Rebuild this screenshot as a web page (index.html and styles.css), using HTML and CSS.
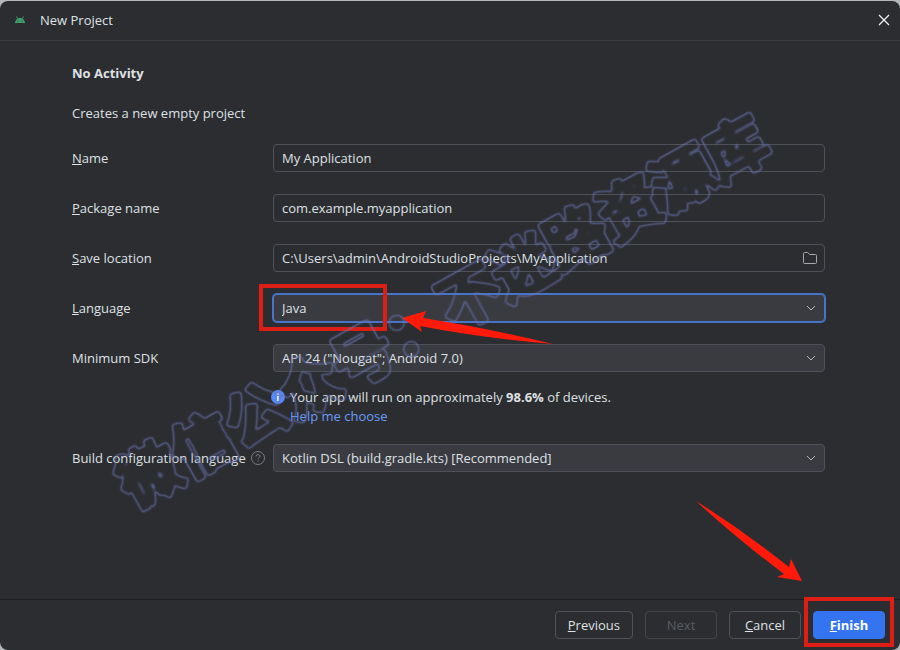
FILE: index.html
```
<!DOCTYPE html>
<html lang="en">
<head>
  <meta charset="utf-8">
  <title>New Project</title>
  <meta name="viewport" content="width=device-width, initial-scale=1">
  <link rel="stylesheet" href="styles.css">
</head>
<body>
  <div class="window">
    <header class="titlebar">
      <svg class="logo" width="12" height="8" viewBox="0 0 12 8">
        <path d="M1 7C1 4.500 3 1.900 6 1.900S11 4.500 11 7Z" fill="#3f9f6b"/>
        <path d="M2.500 .5L3.800 2.800M9.500 .5L8.200 2.800" stroke="#3f9f6b" stroke-width="1"/>
        <circle cx="3.900" cy="5" r=".6" fill="#2b2d30"/>
        <circle cx="8.100" cy="5" r=".6" fill="#2b2d30"/>
      </svg>
      <span class="title">New Project</span>
      <button class="close" type="button" aria-label="Close">
        <svg width="12" height="12" viewBox="0 0 12 12">
          <path d="M1 1L11 11M11 1L1 11" stroke="#f4f4f4" stroke-width="1.200"/>
        </svg>
      </button>
    </header>

    <form class="wizard">
      <main class="content">
        <h1>No Activity</h1>
        <p class="description">Creates a new empty project</p>

        <div class="row">
          <label for="name"><u>N</u>ame</label>
          <div class="field">
            <input type="text" id="name" value="My Application">
          </div>
        </div>
        <div class="row">
          <label for="package"><u>P</u>ackage name</label>
          <div class="field">
            <input type="text" id="package" value="com.example.myapplication">
          </div>
        </div>
        <div class="row">
          <label for="location"><u>S</u>ave location</label>
          <div class="field">
            <input type="text" id="location" value="C:\Users\admin\AndroidStudioProjects\MyApplication">
            <button class="browse" type="button" aria-label="Browse">
              <svg width="16" height="14" viewBox="0 0 16 14">
                <path d="M1.500 2.500Q1.500 1.500 2.500 1.500H5.600L7.800 3.500H13.500Q14.500 3.500 14.500 4.500V11.500Q14.500 12.500 13.500 12.500H2.500Q1.500 12.500 1.500 11.500Z" fill="none" stroke="#a4a7ab"/>
              </svg>
            </button>
          </div>
        </div>
        <div class="row">
          <label for="language"><u>L</u>anguage</label>
          <div class="field active">
            <select id="language">
              <option>Java</option>
              <option>Kotlin</option>
            </select>
            <svg class="chevron" width="10" height="6" viewBox="0 0 10 6">
              <path d="M1 1L5 5L9 1" fill="none" stroke="#b4b7bb"/>
            </svg>
            <span class="highlight"></span>
            <svg class="arrow" width="152" height="36" viewBox="0 0 152 36">
              <path d="M0 9L24 2L21 9Q90 20 151 35Q80 29 18 17L20 23Z" fill="#ff1a0a"/>
            </svg>
          </div>
        </div>
        <div class="row">
          <label for="sdk">Minimum SDK</label>
          <div class="field">
            <select id="sdk">
              <option>API 24 ("Nougat"; Android 7.0)</option>
            </select>
            <svg class="chevron" width="10" height="6" viewBox="0 0 10 6">
              <path d="M1 1L5 5L9 1" fill="none" stroke="#b4b7bb"/>
            </svg>
          </div>
        </div>
        <div class="hint">
          <svg width="14" height="14" viewBox="0 0 14 14">
            <circle cx="7" cy="7" r="7" fill="#548af7"/>
            <path d="M7 3V4.800M7 6V11" stroke="#fff" stroke-width="1.600"/>
          </svg>
          <div class="hint-text">
            <div>Your app will run on approximately <b>98.6%</b> of devices.</div>
            <a href="#">Help me choose</a>
          </div>
        </div>
        <div class="row">
          <div class="label-group">
            <label for="dsl">Build configuration language</label>
            <svg width="14" height="14" viewBox="0 0 14 14">
              <circle cx="7" cy="7" r="6.500" fill="none" stroke="#777a80"/>
              <path d="M5 5.500Q5.100 3.500 7 3.500T9 5.300Q9 6.300 7.800 6.900Q7 7.300 7 8.400M7 9.500V10.700" fill="none" stroke="#777a80"/>
            </svg>
          </div>
          <div class="field">
            <select id="dsl">
              <option>Kotlin DSL (build.gradle.kts) [Recommended]</option>
            </select>
            <svg class="chevron" width="10" height="6" viewBox="0 0 10 6">
              <path d="M1 1L5 5L9 1" fill="none" stroke="#b4b7bb"/>
            </svg>
          </div>
        </div>
      </main>

      <footer class="buttons">
        <button class="btn" type="button"><u>P</u>revious</button>
        <button class="btn" type="button" disabled>Next</button>
        <button class="btn" type="button"><u>C</u>ancel</button>
        <div class="finish">
          <button class="btn primary" type="submit"><u>F</u>inish</button>
          <span class="highlight"></span>
          <svg class="arrow" width="108" height="82" viewBox="0 0 108 82">
            <path d="M2 1Q50 31 95 67L97 59L108 81L83 77L90 74Q42 38 2 1Z" fill="#ff1a0a"/>
          </svg>
        </div>
      </footer>
    </form>
  </div>

  <svg class="watermark" viewBox="0 0 900 650">
    <!-- keeps only the edge of the thick letters -->
    <filter id="hollow" color-interpolation-filters="sRGB">
      <feGaussianBlur in="SourceAlpha" stdDeviation="1.100"/>
      <feComponentTransfer result="edge">
        <feFuncA type="table" tableValues="0 0.400 1 0.400 0"/>
      </feComponentTransfer>
      <feFlood flood-color="#6a72b0"/>
      <feComposite in2="edge" operator="in"/>
    </filter>
    <g transform="translate(443 312) rotate(-29)">
      <text x="0" y="22" filter="url(#hollow)">微信公众号：不迷路资源库</text>
    </g>
  </svg>
</body>
</html>
```
FILE: styles.css
```
* {
  box-sizing: border-box;
}

body {
  margin: 0;
  min-height: 100vh;
  display: flex;
  padding-top: 1px;
  position: relative;
  background: #b4b8b8;
  color: #dfe1e5;
  font: 13px/20px "Open Sans", "Noto Sans", sans-serif;
}

button,
input,
select {
  font: inherit;
  color: inherit;
}

.window {
  flex: 1;
  display: flex;
  flex-direction: column;
  border-radius: 8px;
  background: #2b2d30;
}

.titlebar {
  display: flex;
  align-items: center;
  height: 40px;
  padding: 0 10px 2px 14px;
  border-bottom: 1px solid #3b3d41;
}

.title {
  margin-left: 14px;
}

.close {
  display: flex;
  margin-left: auto;
  padding: 0;
  border: 0;
  background: none;
}

.wizard {
  flex: 1;
  display: flex;
  flex-direction: column;
}

.content {
  flex: 1;
  padding: 22px 75px 20px 72px;
}

h1 {
  margin: 0;
  font-size: 13px;
}

.description {
  margin: 20px 0 21px;
}

.row {
  display: flex;
  align-items: center;
}

.row + .row {
  margin-top: 22px;
}

.row > :first-child {
  width: 201px;
}

.row > .label-group {
  display: flex;
  align-items: center;
  gap: 5px;
}

.field {
  flex: 1;
  display: grid;
  align-items: center;
  position: relative;
}

.field > * {
  grid-area: 1 / 1;
}

.field input,
.field select {
  width: 100%;
  height: 28px;
  padding: 0 8px;
  border: 1px solid #4e5157;
  border-radius: 4px;
  background: #2b2d30;
  outline: 0;
}

.field select {
  appearance: none;
  background: #393b40;
}

.field.active select {
  border-color: #4674c9;
  box-shadow: 0 0 0 1px #4674c9;
}

.chevron,
.browse {
  justify-self: end;
  margin-right: 9px;
}

.chevron {
  pointer-events: none;
}

.browse {
  display: flex;
  margin-right: 7px;
  padding: 0;
  border: 0;
  background: none;
}

.hint {
  display: flex;
  gap: 5px;
  margin: 16px 0 18px 199px;
  line-height: 19px;
}

.hint svg {
  margin-top: 2px;
}

.hint a {
  color: #6b9bfa;
  text-decoration: none;
}

.buttons {
  display: flex;
  justify-content: flex-end;
  gap: 12px;
  padding: 11px 15px;
  border-top: 1px solid #1e1f22;
}

.btn {
  min-width: 72px;
  height: 28px;
  padding: 0 12px;
  border: 1px solid #4e5157;
  border-radius: 4px;
  background: none;
}

.btn:disabled {
  color: #5a5d63;
  border-color: #43454a;
}

.btn.primary {
  border-color: #3574f0;
  background: #3574f0;
  color: #fff;
  font-weight: bold;
}

.finish {
  position: relative;
}

/* red callouts */
.highlight {
  position: absolute;
  border: 4px solid #dc1e14;
  pointer-events: none;
}

.field .highlight {
  top: -10px;
  left: -14px;
  width: 128px;
  height: 47px;
}

.finish .highlight {
  inset: -14px -9px -8px;
}

.arrow {
  position: absolute;
  pointer-events: none;
}

.field .arrow {
  top: 15px;
  left: 129px;
}

.finish .arrow {
  right: 83px;
  bottom: 57px;
}

.watermark {
  position: absolute;
  inset: 0;
  width: 100%;
  height: 100%;
  pointer-events: none;
}

.watermark text {
  font: 500 61px "Noto Sans CJK SC", sans-serif;
  text-anchor: middle;
  stroke: #000;
  stroke-width: 5px;
  stroke-linejoin: round;
  opacity: 0.7;
}
```
